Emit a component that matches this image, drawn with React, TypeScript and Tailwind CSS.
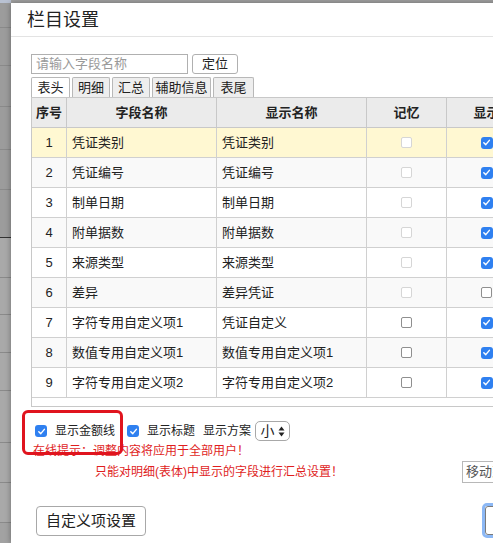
import React from "react";

const rows = [
  { no: 1, field: "凭证类别", display: "凭证类别", memo: "disabled", show: true },
  { no: 2, field: "凭证编号", display: "凭证编号", memo: "disabled", show: true },
  { no: 3, field: "制单日期", display: "制单日期", memo: "disabled", show: true },
  { no: 4, field: "附单据数", display: "附单据数", memo: "disabled", show: true },
  { no: 5, field: "来源类型", display: "来源类型", memo: "disabled", show: true },
  { no: 6, field: "差异", display: "差异凭证", memo: "disabled", show: false },
  { no: 7, field: "字符专用自定义项1", display: "凭证自定义", memo: "enabled", show: true },
  { no: 8, field: "数值专用自定义项1", display: "数值专用自定义项1", memo: "enabled", show: true },
  { no: 9, field: "字符专用自定义项2", display: "字符专用自定义项2", memo: "enabled", show: true },
];

const tabs = [
  { label: "表头", w: "w-[39px]", active: true },
  { label: "明细", w: "w-[38px]" },
  { label: "汇总", w: "w-[38px]" },
  { label: "辅助信息", w: "w-[59px]" },
  { label: "表尾", w: "w-[41px]" },
];

const stripLines = ["h-[25px]", "h-[38px]", "h-[41px]", "h-[43px]", "h-[40px]", "h-[48px]", "h-[40px]", "h-[37px]", "h-[38px]", "h-[38px]", "h-[52px]", "h-[40px]", "h-[40px]"];

function Checked() {
  return (
    <span className="inline-flex w-[12px] h-[12px] rounded-[3px] bg-[#2f80f0] items-center justify-center shrink-0">
      <svg width="9" height="9" viewBox="0 0 10 10">
        <path d="M2 5.2 L4.2 7.4 L8.2 2.6" stroke="white" strokeWidth="1.6" fill="none" strokeLinecap="round" strokeLinejoin="round" />
      </svg>
    </span>
  );
}

function Unchecked({ faint }: { faint?: boolean }) {
  return (
    <span
      className={`inline-block w-[11px] h-[11px] rounded-[2px] border bg-white shrink-0 ${faint ? "border-[#d6d6d6]" : "border-[#8f8f8f]"}`}
    />
  );
}

export default function App() {
  const font = { fontFamily: '"Liberation Sans", "Noto Sans CJK SC", sans-serif' };
  return (
    <div className="relative w-[493px] h-[543px] overflow-hidden bg-[#a2a2a2] flex" style={font}>
      {/* page behind the dialog */}
      <div className="w-[11px] shrink-0 flex flex-col">
        <div className="h-[3px] bg-[#b9c2d3]" />
        {stripLines.map((h, i) => (
          <div key={i} className={`${h} border-b ${i === 5 ? "border-[#333]" : "border-[#8a8a8a]"} ${i < 6 ? "bg-[#9c9c9c]" : "bg-[#a9a9a9]"}`} />
        ))}
      </div>

      <div className="mt-[3px] w-[560px] shrink-0 bg-white shadow-[0_0_6px_rgba(0,0,0,0.35)] flex flex-col text-[#222]">
        <div className="h-[34px] pl-[16px] flex items-center border-b border-[#e3e3e3] text-[18px] leading-none">
          栏目设置
        </div>

        <div className="pl-[20px] pt-[17px] flex items-center gap-[4px]">
          <div className="w-[157px] h-[20px] border border-[#b0b0b0] flex items-center px-[4px] text-[13px] text-[#9a9a9a]">
            请输入字段名称
          </div>
          <div className="w-[46px] h-[20px] border border-[#b0b0b0] rounded-[3px] flex items-center justify-center text-[13px]">
            定位
          </div>
        </div>

        <div className="pl-[20px] mt-[3px] flex gap-[2px] h-[20px] items-end">
          {tabs.map((t) => (
            <div
              key={t.label}
              className={`${t.w} h-[20px] border border-b-0 border-[#b8b8b8] rounded-t-[2px] flex items-center justify-center text-[13px] ${t.active ? "bg-white" : "bg-[#eeeeee]"}`}
            >
              {t.label}
            </div>
          ))}
        </div>

        <div className="ml-[20px] h-[310px] border-l border-t border-b border-[#c8c8c8] flex flex-col">
          <div className="grid grid-cols-[35px_150px_150px_80px_80px] h-[30px] bg-[#ebebeb] font-bold text-[13px]">
            {["序号", "字段名称", "显示名称", "记忆", "显示"].map((h) => (
              <div key={h} className="border-r border-b border-[#c8c8c8] flex items-center justify-center">
                {h}
              </div>
            ))}
          </div>
          {rows.map((r) => (
            <div
              key={r.no}
              className={`grid grid-cols-[35px_150px_150px_80px_80px] h-[30px] text-[13px] ${r.no === 1 ? "bg-[#fff8d2]" : r.no % 2 === 0 ? "bg-[#f9f9f9]" : "bg-white"}`}
            >
              <div className="border-r border-b border-[#d0d0d0] flex items-center justify-center">{r.no}</div>
              <div className="border-r border-b border-[#d0d0d0] flex items-center pl-[5px]">{r.field}</div>
              <div className="border-r border-b border-[#d0d0d0] flex items-center pl-[5px]">{r.display}</div>
              <div className="border-r border-b border-[#d0d0d0] flex items-center justify-center">
                <Unchecked faint={r.memo === "disabled"} />
              </div>
              <div className="border-r border-b border-[#d0d0d0] flex items-center justify-center">
                {r.show ? <Checked /> : <Unchecked />}
              </div>
            </div>
          ))}
        </div>

        <div className="ml-[24px] mt-[14px] h-[20px] flex items-center text-[12px]">
          <Checked />
          <span className="ml-[8px]">显示金额线</span>
          <span className="ml-[12px] flex">
            <Checked />
          </span>
          <span className="ml-[8px]">显示标题</span>
          <span className="ml-[8px]">显示方案</span>
          <div className="ml-[4px] w-[35px] h-[20px] border border-[#a8a8a8] rounded-[5px] flex items-center justify-center gap-[3px] text-[14px]">
            <span>小</span>
            <svg width="7" height="11" viewBox="0 0 7 11">
              <path d="M3.5 0.5 L6.5 4.5 L0.5 4.5 Z" fill="#222" />
              <path d="M3.5 10.5 L6.5 6.5 L0.5 6.5 Z" fill="#222" />
            </svg>
          </div>
        </div>

        <div className="ml-[22px] mt-[3px] h-[13px] flex items-center text-[12px] text-[#e01e1e]">
          在线提示：调整内容将应用于全部用户！
        </div>

        <div className="ml-[84px] mt-[4px] h-[22px] flex items-center text-[12px]">
          <span className="w-[367px] text-[#e01e1e]">只能对明细(表体)中显示的字段进行汇总设置！</span>
          <div className="h-[22px] w-[70px] border border-[#b8b8b8] flex items-center pl-[3px] text-[13px] text-[#555]">
            移动到
          </div>
        </div>

        <div className="ml-[25px] mt-[20px] flex items-start">
          <div className="mt-[3px] w-[110px] h-[30px] border border-[#a8a8a8] rounded-[4px] flex items-center justify-center text-[15px]">
            自定义项设置
          </div>
          <div className="ml-[336px] w-[60px] h-[35px] rounded-[5px] border-[3px] border-[#8cb8f5] bg-white flex items-center justify-center">
            <div className="w-full h-full rounded-[3px] border border-[#7a7a7a]" />
          </div>
        </div>
      </div>

      {/* red annotation box */}
      <div className="absolute left-[22px] top-[410px] w-[101px] h-[45px] border-[3px] border-[#e0141e] rounded-[6px]" />
    </div>
  );
}
